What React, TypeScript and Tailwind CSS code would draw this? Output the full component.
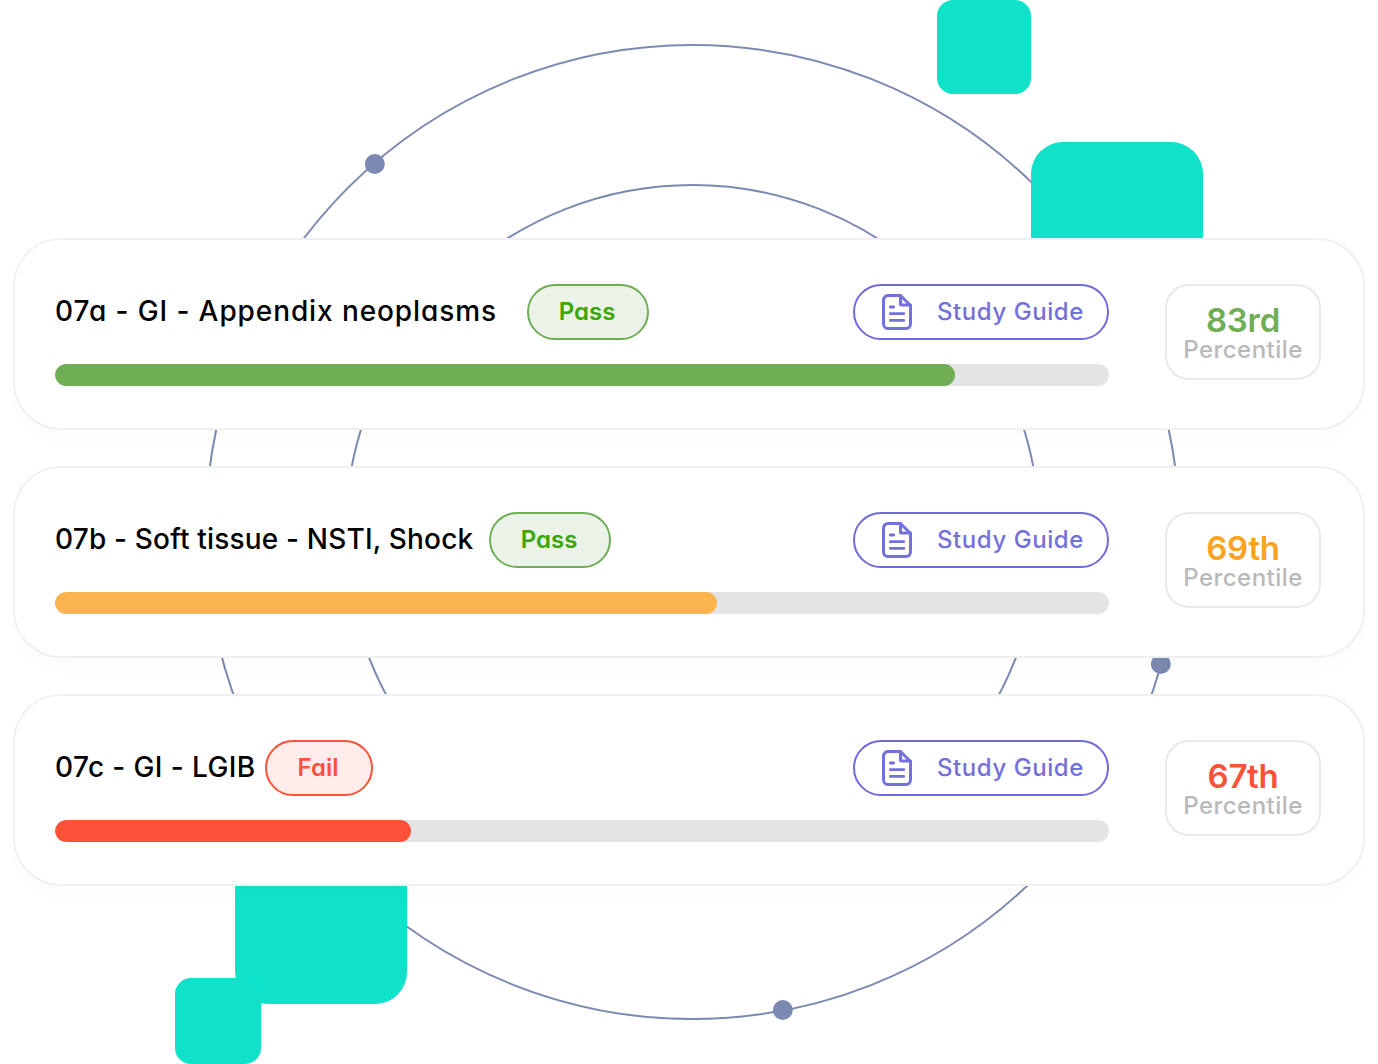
import clsx from 'clsx';

type Topic = {
  title: string;
  titleClass: string;
  status: 'Pass' | 'Fail';
  score: string;
  scoreClass: string;
  barClass: string;
  progress: number;
};

const topics: Topic[] = [
  {
    title: '07a - GI - Appendix neoplasms',
    titleClass: 'w-[472px] tracking-[0.9px]',
    status: 'Pass',
    score: '83rd',
    scoreClass: 'text-[#70ae56]',
    barClass: 'bg-[#70ae56]',
    progress: 900 / 1054,
  },
  {
    title: '07b - Soft tissue - NSTI, Shock',
    titleClass: 'w-[434px] tracking-[0.18px]',
    status: 'Pass',
    score: '69th',
    scoreClass: 'text-[#fca321]',
    barClass: 'bg-[#f9b44e]',
    progress: 662 / 1054,
  },
  {
    title: '07c - GI - LGIB',
    titleClass: 'w-[210px] tracking-[0.4px]',
    status: 'Fail',
    score: '67th',
    scoreClass: 'text-[#fc5239]',
    barClass: 'bg-[#fc5239]',
    progress: 356 / 1054,
  },
];

function Backdrop() {
  return (
    <div className="absolute inset-0">
      <svg className="absolute inset-0" width="1378" height="1064" viewBox="0 0 1378 1064" fill="none">
        <circle cx="692.5" cy="532" r="487" stroke="#7c89b1" strokeWidth="2" />
        <circle cx="692.5" cy="532" r="347" stroke="#7c89b1" strokeWidth="2" />
        <circle cx="374.8" cy="164" r="10" fill="#7c89b1" />
        <circle cx="1160.8" cy="664" r="10" fill="#7c89b1" />
        <circle cx="782.8" cy="1010" r="10" fill="#7c89b1" />
      </svg>
      <div className="absolute left-[937px] top-0 size-[94px] rounded-2xl bg-[#10e2ca]" />
      <div className="absolute left-[1031px] top-[142px] size-[172px] rounded-[32px] bg-[#10e2ca]" />
      <div className="absolute left-[235px] top-[832px] size-[172px] rounded-[32px] bg-[#10e2ca]" />
      <div className="absolute left-[175px] top-[978px] size-[86px] rounded-2xl bg-[#10e2ca]" />
    </div>
  );
}

function GuideIcon() {
  return (
    <svg width="30" height="36" viewBox="0 0 30 36" fill="none" stroke="currentColor" strokeWidth="3" strokeLinecap="round" strokeLinejoin="round">
      <path d="M18.5 1.5H6A4.5 4.5 0 0 0 1.5 6v24A4.5 4.5 0 0 0 6 34.5h18a4.5 4.5 0 0 0 4.5-4.5V11.5z" />
      <path d="M18.5 1.5v8.5a1 1 0 0 0 1 1h9" />
      <path d="M8.3 13h3.4M8.3 19.7h13.4M8.3 26.4h13.4" strokeWidth="2.8" />
    </svg>
  );
}

function StatusPill({ status }: { status: Topic['status'] }) {
  return (
    <span
      className={clsx(
        'flex h-14 items-center justify-center rounded-full border-2 pr-0.5 text-[24px] font-semibold',
        status === 'Pass' ? 'w-[122px] border-[#70ae56] bg-[#ebf3e8] text-[#3aa60a]' : 'w-[108px] border-[#fc5239] bg-[#ffeceb] text-[#fc5239]',
      )}
    >
      {status}
    </span>
  );
}

function TopicCard({ topic }: { topic: Topic }) {
  return (
    <section className="flex h-48 items-start justify-between rounded-[48px] border-2 border-[#f0f0f0] bg-white pt-11 pr-[42px] pl-10 shadow-[0_16px_24px_-8px_rgba(0,0,0,0.02)]">
      <div className="w-[1054px]">
        <div className="flex h-14 items-center">
          <h2 className={clsx('shrink-0 pb-[3px] text-[28px] leading-[42px] font-medium whitespace-nowrap text-black', topic.titleClass)}>{topic.title}</h2>
          <StatusPill status={topic.status} />
          <button className="ml-auto flex h-14 w-64 items-center rounded-full border-2 border-[#6f6bd9] pl-[27px] text-[#7370dc]">
            <GuideIcon />
            <span className="ml-[25px] text-[24px] font-medium tracking-[0.57px] whitespace-nowrap">Study Guide</span>
          </button>
        </div>
        <div className="mt-6 h-[22px] overflow-hidden rounded-full bg-[#e4e4e4]">
          <div className={clsx('h-full rounded-full', topic.barClass)} style={{ width: `${topic.progress * 100}%` }} />
        </div>
      </div>
      <div className="flex h-24 w-[156px] flex-col items-center rounded-3xl border-2 border-[#e9e9e9] pt-[18px]">
        <span className={clsx('text-[33px] leading-[33px] font-semibold tracking-[-0.3px]', topic.scoreClass)}>{topic.score}</span>
        <span className="text-[24px] leading-[26px] font-medium tracking-[0.45px] text-[#b9b9b9]">Percentile</span>
      </div>
    </section>
  );
}

export default function App() {
  return (
    <div className="relative h-[1064px] w-[1378px] overflow-hidden bg-white font-['Inter',sans-serif] [font-feature-settings:'cv11']">
      <Backdrop />
      <main className="relative flex flex-col gap-9 pt-[238px] pr-[13px] pl-[13px]">
        {topics.map((topic) => (
          <TopicCard key={topic.title} topic={topic} />
        ))}
      </main>
    </div>
  );
}
